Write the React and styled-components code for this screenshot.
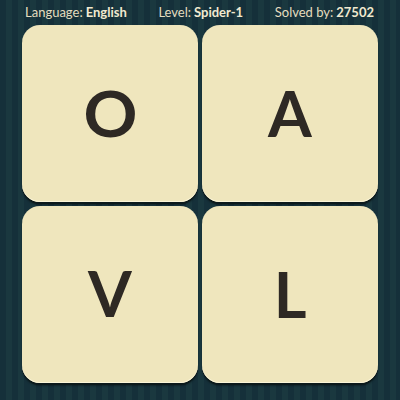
import React from 'react';
import styled, { createGlobalStyle } from 'styled-components';

const Global = createGlobalStyle`
  html, body { margin: 0; padding: 0; }
  body {
    width: 400px;
    height: 400px;
    overflow: hidden;
    background: #163239;
  }
`

const Page = styled.div`
  width: 400px;
  height: 400px;
  box-sizing: border-box;
  background: repeating-linear-gradient(
    to right,
    #15303a 0px,
    #15303a 6px,
    #1a383f 6px,
    #1a383f 12px
  );
  font-family: "Lato", "Open Sans", sans-serif;
  display: flex;
  flex-direction: column;
`

const Header = styled.div`
  height: 24px;
  display: flex;
  align-items: center;
  justify-content: space-between;
  padding: 0 26px 0 25px;
  color: #e4ddbf;
  font-size: 13px;
`

const Info = styled.span`
  white-space: nowrap;
  b { font-weight: 700; color: #f1ead0; margin-left: 3px; }
`

const Board = styled.div`
  display: grid;
  grid-template-columns: 176px 176px;
  grid-template-rows: 177px 177px;
  gap: 4px;
  padding: 1px 0 0 22px;
`

const Tile = styled.div`
  background: #efe6bd;
  border-radius: 18px;
  box-shadow: inset 0 -1px 0 #fbf5d8, 0 2px 0 #0c1a1c, 0 3px 2px rgba(0,0,0,0.35);
  display: flex;
  align-items: center;
  justify-content: center;
  color: #2e2924;
  font-size: 63px;
  font-weight: 700;
  line-height: 1;
  padding-bottom: ${p => p.$lift || 0}px;
  box-sizing: border-box;
`

const Round = styled.span`
  display: inline-block;
  transform: scaleX(1.06);
`

export default function App() {
  return (
    <Page>
      <Global />
      <Header>
        <Info>Language:<b>English</b></Info>
        <Info>Level:<b>Spider-1</b></Info>
        <Info>Solved by:<b>27502</b></Info>
      </Header>
      <Board>
        <Tile $lift={2}><Round>O</Round></Tile>
        <Tile $lift={2}>A</Tile>
        <Tile $lift={4}>V</Tile>
        <Tile $lift={2}>L</Tile>
      </Board>
    </Page>
  );
}
